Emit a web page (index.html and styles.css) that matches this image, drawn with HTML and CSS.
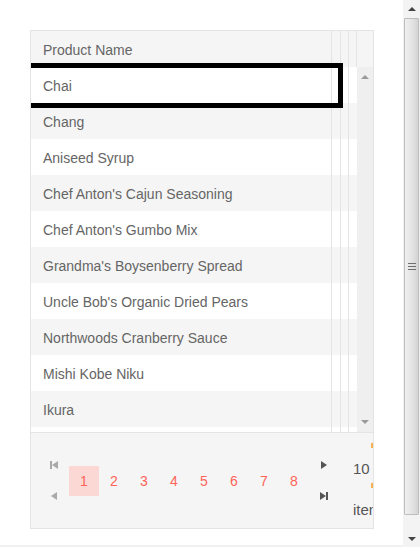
FILE: index.html
```html
<!DOCTYPE html>
<html>
<head>
<meta charset="utf-8">
<link rel="stylesheet" href="styles.css">
</head>
<body>
<div class="viewport">
  <div class="page">
    <div class="grid">
      <div class="grid-header">
        <div class="c1 hcell">Product Name</div>
        <div class="c2"></div>
        <div class="c3"></div>
        <div class="c4"></div>
        <div class="hpad"></div>
      </div>
      <div class="grid-content">
        <div class="rows">
          <div class="row"><div class="c1 cell">Chai</div><div class="c2"></div><div class="c3"></div><div class="c4"></div></div>
          <div class="row alt"><div class="c1 cell">Chang</div><div class="c2"></div><div class="c3"></div><div class="c4"></div></div>
          <div class="row"><div class="c1 cell">Aniseed Syrup</div><div class="c2"></div><div class="c3"></div><div class="c4"></div></div>
          <div class="row alt"><div class="c1 cell">Chef Anton's Cajun Seasoning</div><div class="c2"></div><div class="c3"></div><div class="c4"></div></div>
          <div class="row"><div class="c1 cell">Chef Anton's Gumbo Mix</div><div class="c2"></div><div class="c3"></div><div class="c4"></div></div>
          <div class="row alt"><div class="c1 cell">Grandma's Boysenberry Spread</div><div class="c2"></div><div class="c3"></div><div class="c4"></div></div>
          <div class="row"><div class="c1 cell">Uncle Bob's Organic Dried Pears</div><div class="c2"></div><div class="c3"></div><div class="c4"></div></div>
          <div class="row alt"><div class="c1 cell">Northwoods Cranberry Sauce</div><div class="c2"></div><div class="c3"></div><div class="c4"></div></div>
          <div class="row"><div class="c1 cell">Mishi Kobe Niku</div><div class="c2"></div><div class="c3"></div><div class="c4"></div></div>
          <div class="row alt"><div class="c1 cell">Ikura</div><div class="c2"></div><div class="c3"></div><div class="c4"></div></div>
          <div class="row"><div class="c1 cell">Queso Cabrales</div><div class="c2"></div><div class="c3"></div><div class="c4"></div></div>
        </div>
        <div class="vscroll">
          <span class="tri-up small"></span>
          <span class="tri-down small"></span>
        </div>
      </div>
      <div class="pager">
        <div class="navcol">
          <span class="navbtn"><svg width="8" height="8" viewBox="0 0 8 8"><rect x="0" y="0" width="2" height="8" fill="#a9a9a9"/><polygon points="8,0 8,8 2,4" fill="#a9a9a9"/></svg></span>
          <span class="navbtn"><svg width="8" height="8" viewBox="0 0 8 8"><polygon points="7,0 7,8 1,4" fill="#a9a9a9"/></svg></span>
        </div>
        <div class="numbers">
          <span class="num selected">1</span>
          <span class="num">2</span>
          <span class="num">3</span>
          <span class="num">4</span>
          <span class="num">5</span>
          <span class="num">6</span>
          <span class="num">7</span>
          <span class="num">8</span>
        </div>
        <div class="navcol">
          <span class="navbtn"><svg width="8" height="8" viewBox="0 0 8 8"><polygon points="1,0 1,8 7,4" fill="#545454"/></svg></span>
          <span class="navbtn"><svg width="8" height="8" viewBox="0 0 8 8"><polygon points="0,0 0,8 6,4" fill="#545454"/><rect x="6" y="0" width="2" height="8" fill="#545454"/></svg></span>
        </div>
        <div class="sizes">
          <span class="mark"></span>
          <span class="ddl">10</span>
          <span class="mark"></span>
          <span class="label">items per page</span>
        </div>
      </div>
      <div class="focus"></div>
    </div>
  </div>
  <div class="scrollbar">
    <div class="sb-btn"><span class="tri-up"></span></div>
    <div class="sb-thumb"><span class="grip"></span><span class="grip"></span><span class="grip"></span></div>
    <div class="sb-space"></div>
    <div class="sb-btn"><span class="tri-down"></span></div>
  </div>
</div>
</body>
</html>
```

FILE: styles.css
```css
html, body {
  margin: 0;
  padding: 0;
  height: 547px;
  overflow: hidden;
  background: #ffffff;
  font-family: "Liberation Sans", Arial, sans-serif;
  font-size: 14px;
  color: #656565;
}

.viewport {
  display: flex;
  height: 547px;
}

.page {
  flex: 1;
  padding: 30px 0 0 30px;
  border-bottom: 2px solid #f1f1f1;
  box-sizing: border-box;
}

.grid {
  position: relative;
  width: 342px;
  border: 1px solid #e4e4e4;
  overflow: hidden;
}

.grid-header {
  display: flex;
  height: 36px;
  background: #f5f5f5;
}

.c1 { width: 300px; flex: none; }
.c2 { width: 8px; flex: none; border-left: 1px solid #e4e4e4; }
.c3 { width: 7px; flex: none; border-left: 1px solid #e4e4e4; }
.c4 { width: 7px; flex: none; border-left: 1px solid #e4e4e4; }
.hpad { width: 16px; flex: none; border-left: 1px solid #e4e4e4; }

.hcell, .cell {
  box-sizing: border-box;
  height: 36px;
  padding-left: 12px;
  padding-top: 1px;
  line-height: 36px;
  white-space: nowrap;
  overflow: hidden;
}

.grid-content {
  display: flex;
  height: 365px;
  overflow: hidden;
  border-bottom: 1px solid #e4e4e4;
}

.rows {
  width: 326px;
  flex: none;
}

.row {
  display: flex;
  height: 36px;
  background: #ffffff;
}

.row.alt {
  background: #f5f5f5;
}

.vscroll {
  width: 16px;
  flex: none;
  background: #efefef;
  display: flex;
  flex-direction: column;
  justify-content: space-between;
  align-items: center;
  padding: 8px 0 8px;
  box-sizing: border-box;
}

.tri-up {
  width: 0;
  height: 0;
  border-left: 4px solid transparent;
  border-right: 4px solid transparent;
  border-bottom: 4px solid #444;
}

.tri-down {
  width: 0;
  height: 0;
  border-left: 4px solid transparent;
  border-right: 4px solid transparent;
  border-top: 4px solid #444;
}

.tri-up.small { border-bottom-color: #9a9a9a; }
.tri-down.small { border-top-color: #9a9a9a; }

.pager {
  display: flex;
  align-items: center;
  height: 95px;
  background: #f5f5f5;
  padding-left: 8px;
  white-space: nowrap;
}

.navcol {
  display: flex;
  flex-direction: column;
  width: 30px;
  flex: none;
}

.navbtn {
  height: 31px;
  display: flex;
  align-items: center;
  justify-content: center;
}

.numbers {
  display: flex;
  flex: none;
}

.num {
  width: 30px;
  height: 30px;
  line-height: 30px;
  text-align: center;
  color: #ff6358;
  font-size: 14px;
}

.num.selected {
  background: #fbd8d4;
}

.sizes {
  display: flex;
  flex-direction: column;
  margin-left: 14px;
  flex: none;
}

.mark {
  display: block;
  width: 2px;
  height: 5px;
  margin-left: 18px;
  background: #f4b24e;
}

.ddl {
  line-height: 16px;
  margin: 13px 0 6px;
  font-size: 15px;
  color: #555;
}

.label {
  line-height: 16px;
  margin-top: 14px;
  font-size: 15px;
  color: #555;
}

.focus {
  position: absolute;
  left: -6px;
  top: 32px;
  width: 308px;
  height: 35px;
  border: 5px solid #000;
}

.scrollbar {
  width: 17px;
  flex: none;
  background: #f3f3f3;
  display: flex;
  flex-direction: column;
}

.sb-btn {
  height: 17px;
  display: flex;
  align-items: center;
  justify-content: center;
  flex: none;
}

.sb-thumb {
  height: 497px;
  margin: 1px 1px 0 1px;
  box-sizing: border-box;
  border: 1px solid #bdbdbd;
  border-radius: 1px;
  background: linear-gradient(to right, #f0f0f0, #e3e3e3 55%, #d3d3d3);
  display: flex;
  flex-direction: column;
  align-items: center;
  justify-content: center;
  gap: 2px;
  flex: none;
}

.grip {
  display: block;
  width: 8px;
  height: 1px;
  background: #6f6f6f;
}

.sb-space {
  flex: 1;
}
```
